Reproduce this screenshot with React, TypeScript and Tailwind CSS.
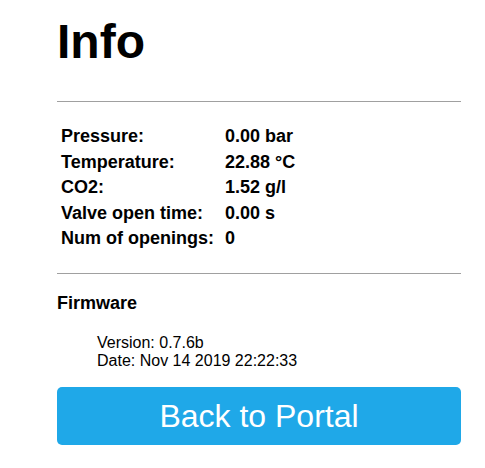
const readings = [
  { label: "Pressure:", value: "0.00 bar" },
  { label: "Temperature:", value: "22.88 °C" },
  { label: "CO2:", value: "1.52 g/l" },
  { label: "Valve open time:", value: "0.00 s" },
  { label: "Num of openings:", value: "0" },
];

export default function App() {
  return (
    <div className="min-h-[468px] w-[485px] bg-white font-['Liberation_Sans',Arial,sans-serif] text-black">
      <div className="ml-[57px] w-[404px] pt-[18px]">
        <h1 className="text-[48px] font-bold leading-none">Info</h1>

        <hr className="mt-[35px] border-t border-[#a0a0a0]" />

        <div className="mt-[22px] grid grid-cols-[164px_1fr] pl-[4px] text-[18px] font-bold leading-[25.5px]">
          {readings.map((r) => (
            <div key={r.label} className="contents">
              <span className="whitespace-nowrap">{r.label}</span>
              <span className="whitespace-nowrap">{r.value}</span>
            </div>
          ))}
        </div>

        <hr className="mt-[21px] border-t border-[#a0a0a0]" />

        <h3 className="mt-[19px] text-[18px] font-bold leading-[20px]">Firmware</h3>
        <div className="mt-[21px] pl-[40px] text-[16px] leading-[18.4px]">
          <div>Version: 0.7.6b</div>
          <div>Date: Nov 14 2019 22:22:33</div>
        </div>

        <button
          type="button"
          className="mt-[17px] h-[58px] w-full rounded-[5px] bg-[#1fa8e8] text-[32px] leading-none text-white"
        >
          Back to Portal
        </button>
      </div>
    </div>
  );
}
